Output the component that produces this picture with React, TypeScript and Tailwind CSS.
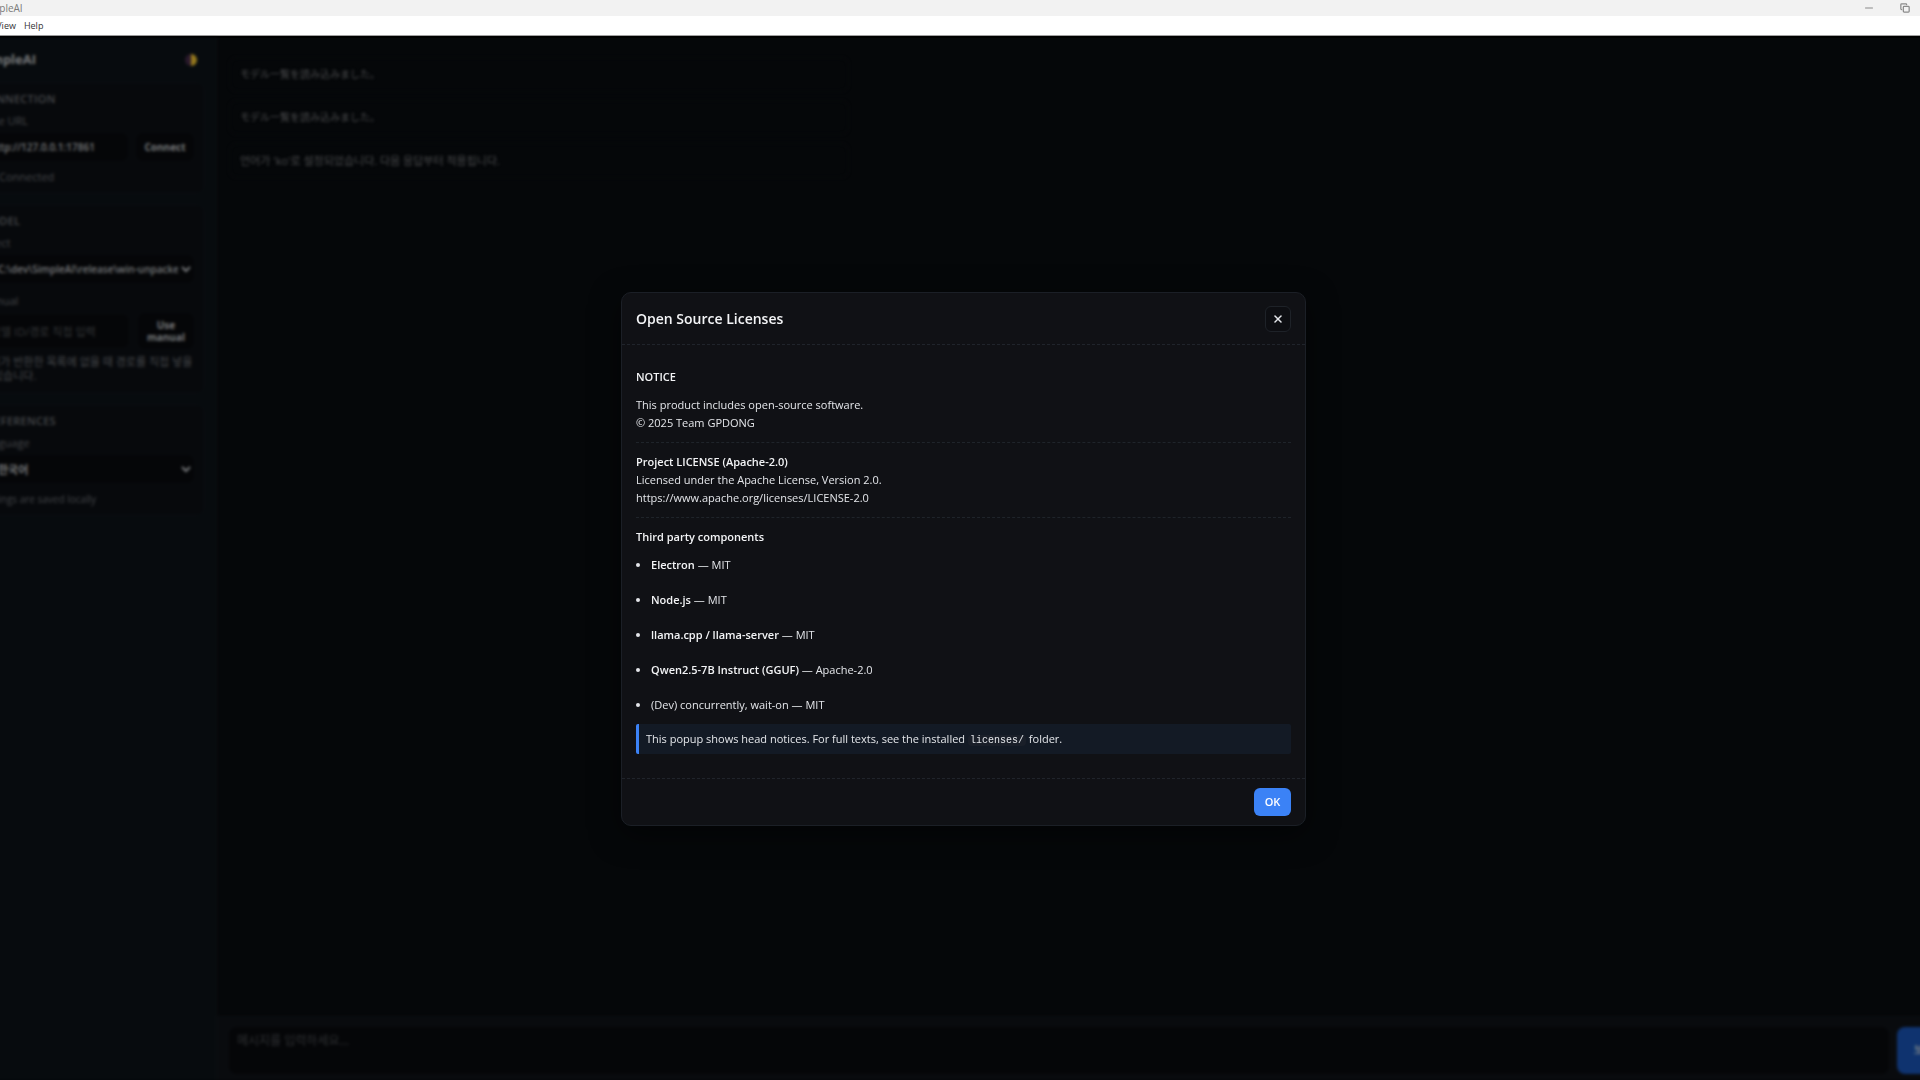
import React from "react";
import { Copy, Minus, X } from "lucide-react";

const COMPONENTS = [
    { name: "Electron", license: "MIT" },
    { name: "Node.js", license: "MIT" },
    { name: "llama.cpp / llama-server", license: "MIT" },
    { name: "Qwen2.5-7B Instruct (GGUF)", license: "Apache-2.0" },
];

const TitleBar: React.FC = () => (
    <header className="font-['Open_Sans','Noto_Sans_CJK_KR',sans-serif] leading-4">
        <div className="flex h-4 items-center justify-between bg-[#f2f2f2] pl-7 text-[10px] text-[#7a7a7a]">
            <span>SimpleAI</span>
            <div className="flex items-center gap-6 pr-[62px] text-[#8a8a8a]">
                <button aria-label="Minimize" className="flex w-3 justify-center">
                    <Minus size={12} />
                </button>
                <button aria-label="Restore" className="flex w-3 justify-center">
                    <Copy size={10} className="-scale-x-100 -rotate-90" strokeWidth={3} />
                </button>
            </div>
        </div>
        <nav className="flex h-5 items-center gap-1.5 border-b border-[#a0a0a0] bg-white text-[9px] text-[#333]">
            <button>File</button>
            <button>Edit</button>
            <button>View</button>
            <button className="pl-0.5">Help</button>
        </nav>
    </header>
);

interface CardProps {
    title: string;
    children: React.ReactNode;
}

const Card: React.FC<CardProps> = ({ title, children }) => (
    <section className="rounded-lg border border-[#0a0e12] bg-[#07090c] pt-2 pr-2.5 pb-1.5 pl-3.5">
        <h2 className="mb-1 text-[11px] leading-4 font-semibold tracking-wide text-[#45474a] uppercase">
            {title}
        </h2>
        {children}
    </section>
);

const Sidebar: React.FC = () => (
    <aside className="flex w-[263px] shrink-0 flex-col gap-2.5 border-r border-[#0c1013] bg-[#070b0e] px-[11px] pt-2.5">
        <div className="flex h-6 items-center justify-between pr-2 pl-3.5">
            <h1 className="text-[13px] font-bold text-[#77797b]">SimpleAI</h1>
            <button aria-label="Toggle theme">
                <svg width="12" height="12" viewBox="0 0 12 12">
                    <path d="M6 0a6 6 0 0 0 0 12z" fill="#2a1a2c" />
                    <path d="M6 0a6 6 0 0 1 0 12z" fill="#94781d" />
                </svg>
            </button>
        </div>

        <Card title="Connection">
            <label htmlFor="base-url" className="block text-[11px] leading-5 text-[#45474a]">
                Base URL
            </label>
            <div className="flex gap-2 pt-0.5">
                <input
                    id="base-url"
                    defaultValue="http://127.0.0.1:17861"
                    className="h-7 min-w-0 flex-1 rounded-lg bg-[#050608] px-2.5 text-[10px] font-semibold text-[#77797b]"
                />
                <button className="h-7 w-[58px] rounded-lg bg-[#050608] text-[10px] font-bold text-[#77797b]">
                    Connect
                </button>
            </div>
            <p className="flex gap-2 pt-1.5 text-[11px] leading-5 text-[#45474a]">
                <span>●</span>
                <span>Connected</span>
            </p>
        </Card>

        <Card title="Model">
            <label htmlFor="model" className="block text-[11px] leading-5 text-[#45474a]">
                Select
            </label>
            <div className="pt-0.5">
                <select
                    id="model"
                    className="block h-7 w-full rounded-lg bg-[#050608] pl-3.5 text-[10px] font-semibold text-[#77797b]"
                >
                    <option>C:\dev\SimpleAI\release\win-unpacke</option>
                </select>
            </div>
            <label htmlFor="manual" className="block pt-2 text-[11px] leading-5 text-[#45474a]">
                Manual
            </label>
            <div className="flex gap-2 pt-0.5">
                <input
                    id="manual"
                    placeholder="모델 ID/경로 직접 입력"
                    className="h-9 min-w-0 flex-1 rounded-lg border border-[#0a0c0f] bg-[#050608] px-2.5 text-[11px] placeholder:text-[#343638]"
                />
                <button className="h-9 w-[56px] rounded-lg bg-[#050608] text-[10px] leading-3 font-bold text-[#77797b]">
                    Use manual
                </button>
            </div>
            <p className="pt-1.5 pb-1 text-[11px] leading-[14px] text-[#45474a]">
                서버가 반환한 목록에 없을 때 경로를 직접 넣을
                <br />수 있습니다.
            </p>
        </Card>

        <Card title="Preferences">
            <label htmlFor="language" className="block text-[11px] leading-5 text-[#45474a]">
                Language
            </label>
            <div className="pt-0.5">
                <select
                    id="language"
                    className="block h-7 w-full rounded-lg bg-[#050608] pl-3.5 text-[11px] font-semibold text-[#77797b]"
                >
                    <option>한국어</option>
                </select>
            </div>
            <p className="pt-1.5 text-[10px] leading-5 text-[#45474a]">
                Settings are saved locally
            </p>
        </Card>
    </aside>
);

interface MessageProps {
    lang: "ja" | "ko";
    children: React.ReactNode;
}

const Message: React.FC<MessageProps> = ({ lang, children }) => (
    <div
        lang={lang}
        className={`w-[620px] rounded-lg border border-[#090b0d] px-2.5 py-2 leading-[17px] text-[#4a4b4d] ${lang === "ja" ? "text-[10px]" : "text-[11px]"}`}
    >
        {children}
    </div>
);

const Chat: React.FC = () => (
    <main className="flex min-w-0 flex-1 flex-col">
        <div className="flex flex-1 flex-col gap-2 px-3 pt-[19px]">
            <Message lang="ja">モデル一覧を読み込みました。</Message>
            <Message lang="ja">モデル一覧を読み込みました。</Message>
            <Message lang="ko">언어가 'ko'로 설정되었습니다. 다음 응답부터 적용됩니다.</Message>
        </div>
        <form className="flex gap-2 border-t border-[#0c0e11] bg-[#090b0e] px-3 pt-2.5 pb-1.5">
            <textarea
                aria-label="Message"
                placeholder="메시지를 입력하세요…"
                className="h-[47px] flex-1 resize-none rounded-lg bg-[#050608] px-2 py-1.5 text-[12px] leading-4 placeholder:text-[#303234]"
            />
            <button
                type="button"
                className="h-[47px] w-[64px] rounded-lg bg-[#0f336f] text-[11px] font-bold text-[#6c7683]"
            >
                보내기
            </button>
        </form>
    </main>
);

const Divider: React.FC = () => (
    <hr className="my-2.5 border-t border-dashed border-[#1f242a]" />
);

const LicensesDialog: React.FC = () => (
    <div
        role="dialog"
        aria-labelledby="licenses-title"
        className="w-[685px] rounded-[10px] border border-[#1b1f26] bg-[#101115] text-[11px] leading-[18px] text-[#e4e6ea] shadow-[0_8px_30px_rgba(0,0,0,0.5)]"
    >
        <div className="flex h-[52px] items-center justify-between border-b border-dashed border-[#20242b] px-3.5">
            <h2 id="licenses-title" className="text-[14px] font-semibold text-[#f3f4f6]">
                Open Source Licenses
            </h2>
            <button
                aria-label="Close"
                className="flex size-[26px] items-center justify-center rounded-md border border-[#1e2228] bg-[#0d0e12]"
            >
                <X size={12} strokeWidth={3} />
            </button>
        </div>

        <div className="px-3.5 pt-[23px] pb-6">
            <h3 className="mb-2.5 font-semibold text-[#f3f4f6]">NOTICE</h3>
            <p>
                This product includes open-source software.
                <br />© 2025 Team GPDONG
            </p>
            <Divider />
            <h3 className="font-semibold text-[#f3f4f6]">Project LICENSE (Apache-2.0)</h3>
            <p>
                Licensed under the Apache License, Version 2.0.
                <br />
                https://www.apache.org/licenses/LICENSE-2.0
            </p>
            <Divider />
            <h3 className="mb-2.5 font-semibold text-[#f3f4f6]">Third party components</h3>
            <ul className="mb-2.5 flex list-disc flex-col gap-[17px] pl-[15px]">
                {COMPONENTS.map((item) => (
                    <li key={item.name}>
                        <strong className="font-semibold text-[#f3f4f6]">{item.name}</strong> — {item.license}
                    </li>
                ))}
                <li>(Dev) concurrently, wait-on — MIT</li>
            </ul>
            <p className="rounded-xs border-l-3 border-[#3b82f6] bg-[#131a25] px-[7px] py-1.5">
                This popup shows head notices. For full texts, see the installed{" "}
                <code className="rounded bg-[#1a1f29] px-0.5 font-['Liberation_Mono',monospace] text-[10px] leading-3">
                    licenses/
                </code>{" "}
                folder.
            </p>
        </div>

        <div className="flex justify-end border-t border-dashed border-[#20242b] px-3.5 py-[9px]">
            <button className="h-7 w-[37px] rounded-md bg-[#3b82f6] text-[11px] font-semibold text-white">
                OK
            </button>
        </div>
    </div>
);

export default function App() {
    return (
        <div className="h-screen overflow-hidden bg-[#050709]">
            {/* the window is wider than the screen and hangs over both edges */}
            <div className="-mr-[53px] -ml-[46px] flex h-full flex-col">
                <TitleBar />
                <div className="relative flex min-h-0 flex-1 border-t-2 border-black font-['Open_Sans','Noto_Sans_CJK_KR',sans-serif]">
                    <div className="flex flex-1 blur-[1.5px]">
                        <Sidebar />
                        <Chat />
                    </div>
                    <div className="absolute inset-0 flex items-center justify-center">
                        <LicensesDialog />
                    </div>
                </div>
            </div>
        </div>
    );
}
